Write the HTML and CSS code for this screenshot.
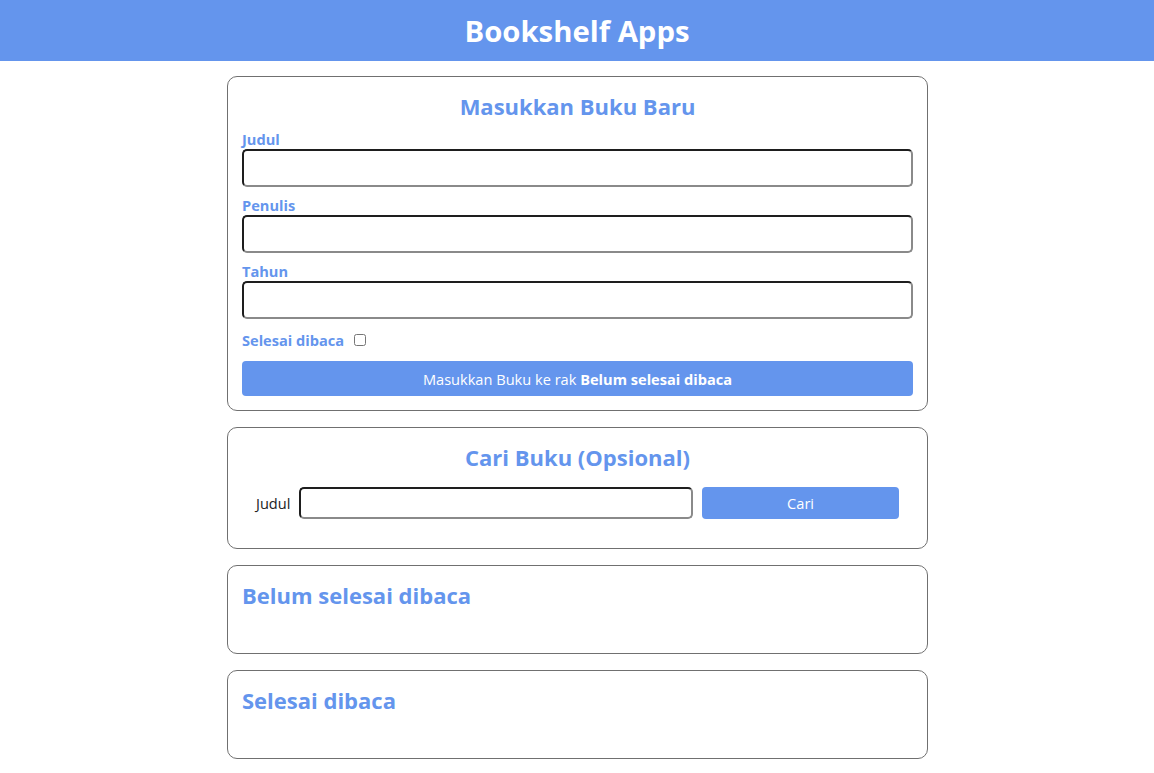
FILE: index.html
```html
<!DOCTYPE html>
<html lang="id">
<head>
<meta charset="utf-8">
<title>Bookshelf Apps</title>
<link rel="stylesheet" href="styles.css">
</head>
<body>
<header class="head-bar">
  <h1 class="head-title">Bookshelf Apps</h1>
</header>
<main class="main">
  <section class="card input-section">
    <h2 class="card-title center">Masukkan Buku Baru</h2>
    <form class="input-form">
      <div class="field">
        <label class="field-label" for="inputBookTitle">Judul</label>
        <input class="text-input" id="inputBookTitle" type="text">
      </div>
      <div class="field">
        <label class="field-label" for="inputBookAuthor">Penulis</label>
        <input class="text-input" id="inputBookAuthor" type="text">
      </div>
      <div class="field">
        <label class="field-label" for="inputBookYear">Tahun</label>
        <input class="text-input" id="inputBookYear" type="number">
      </div>
      <div class="field-inline">
        <label class="field-label inline-label" for="inputBookIsComplete">Selesai dibaca</label>
        <input class="check" id="inputBookIsComplete" type="checkbox">
      </div>
      <button class="btn submit-btn" type="submit">Masukkan Buku ke rak <span class="bold">Belum selesai dibaca</span></button>
    </form>
  </section>
  <section class="card search-section">
    <h2 class="card-title center">Cari Buku (Opsional)</h2>
    <form class="search-form">
      <label class="search-label" for="searchBookTitle">Judul</label>
      <input class="text-input search-input" id="searchBookTitle" type="text">
      <button class="btn search-btn" type="submit">Cari</button>
    </form>
  </section>
  <section class="card shelf">
    <h2 class="card-title">Belum selesai dibaca</h2>
    <div class="book-list"></div>
  </section>
  <section class="card shelf">
    <h2 class="card-title">Selesai dibaca</h2>
    <div class="book-list"></div>
  </section>
</main>
</body>
</html>
```
FILE: styles.css
```css
* {
  margin: 0;
  padding: 0;
  box-sizing: border-box;
  font-family: "Open Sans", "Liberation Sans", sans-serif;
}

body {
  background: #ffffff;
}

.head-bar {
  height: 61px;
  background-color: #6495ed;
  color: #ffffff;
  display: flex;
  align-items: center;
  justify-content: center;
}

.head-title {
  font-size: 29.3px;
  font-weight: 700;
  line-height: 38px;
  margin-top: 1px;
}

.main {
  width: 701px;
  margin-left: calc(50% - 350px);
  padding: 15px 0 14px;
  display: flex;
  flex-direction: column;
  gap: 16px;
}

.card {
  border: 1px solid #707070;
  border-radius: 10px;
  padding: 14px;
}

.card-title {
  color: #6495ed;
  font-size: 22px;
  font-weight: 700;
  line-height: 30px;
}

.center {
  text-align: center;
}

.field {
  margin-top: 8px;
}

.field:first-child {
  margin-top: 8px;
}

.field-label {
  display: block;
  color: #6495ed;
  font-weight: 700;
  font-size: 14.6px;
  line-height: 20px;
}

.text-input {
  display: block;
  width: 100%;
  height: 38px;
  padding: 7px;
  border-radius: 5px;
  border-style: solid;
  border-width: 2px;
  border-color: #1e1e1e #8a8a8a #8a8a8a #1e1e1e;
  font-size: 12px;
  background: #ffffff;
  outline: none;
}

.field-inline {
  display: flex;
  align-items: center;
  height: 20px;
  margin: 11px 0;
}

.inline-label {
  display: inline;
  margin: 0 10px 0 0;
}

.check {
  width: 12px;
  height: 12px;
  margin: 0;
}

.btn {
  background-color: #6495ed;
  color: #ffffff;
  border: 0;
  border-radius: 4px;
  font-size: 14.6px;
  cursor: pointer;
}

.submit-btn {
  display: block;
  width: 100%;
  height: 35px;
  line-height: 20px;
}

.bold {
  font-weight: 700;
}

.search-form {
  padding: 15px 14px;
  display: grid;
  grid-template-columns: auto 1fr 0.5fr;
  column-gap: 9px;
  height: 62px;
}

.search-label {
  display: flex;
  align-items: center;
  font-size: 14.6px;
  color: #222222;
}

.search-input {
  height: 32px;
  padding: 4px;
}

.search-btn {
  height: 32px;
}

.book-list {
  height: 29px;
}
```
